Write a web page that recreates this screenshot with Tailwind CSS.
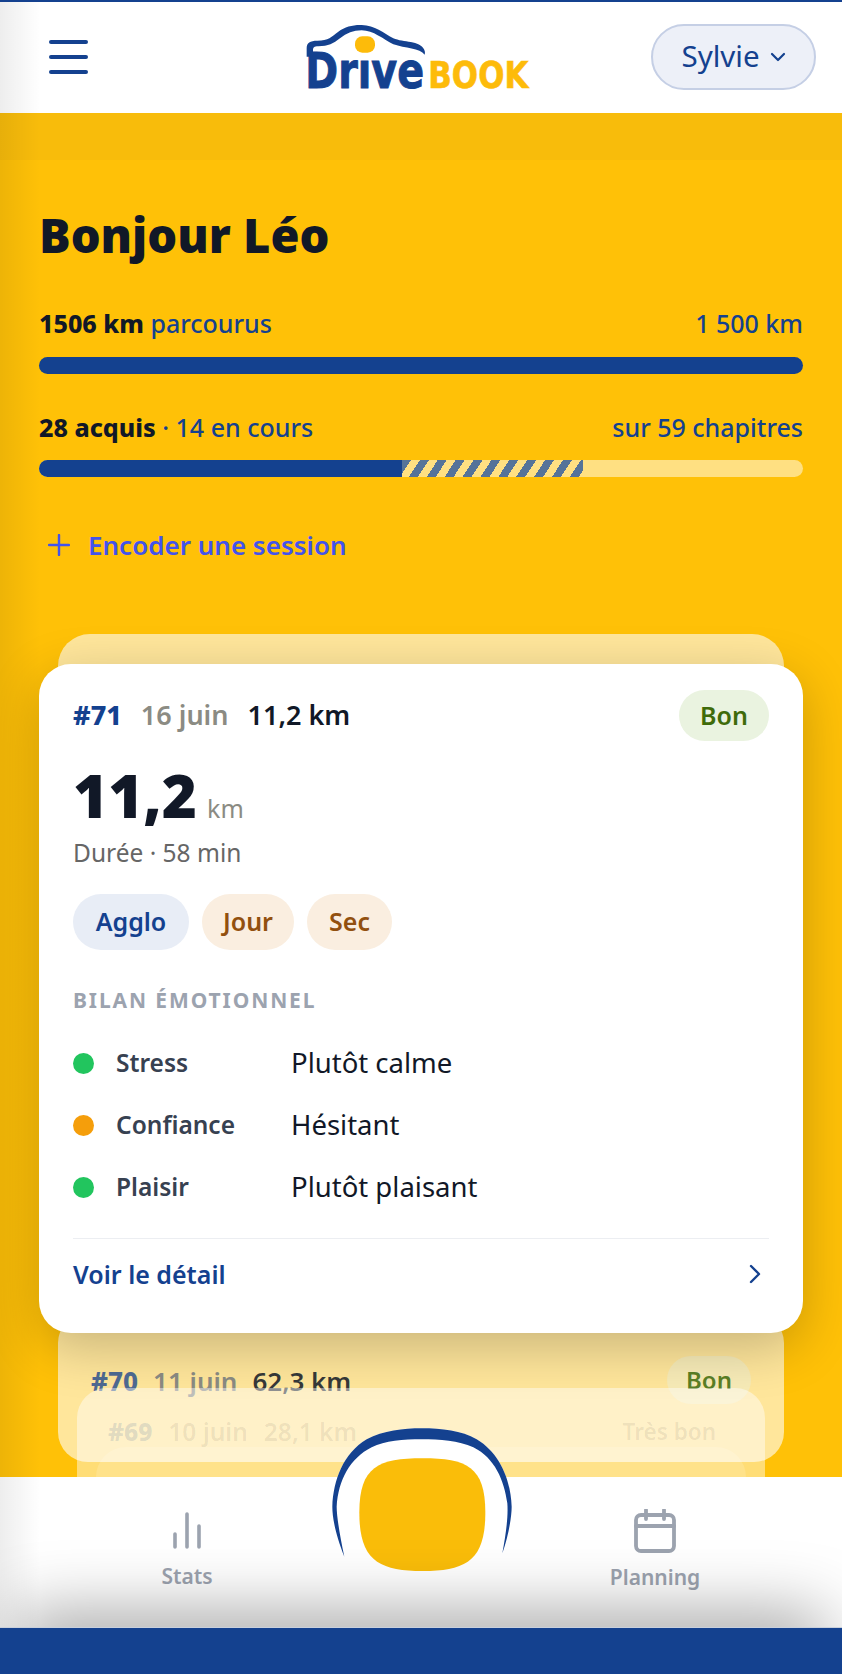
<!DOCTYPE html>
<html lang="fr">
<head>
    <meta charset="UTF-8">
    <meta name="viewport" content="width=device-width, initial-scale=1.0">
    <title>DriveBook</title>
    <script src="https://cdn.jsdelivr.net/npm/@tailwindcss/browser@4"></script>
</head>
<body class="bg-white font-['Noto_Sans','Lato',sans-serif]">
<div class="relative w-[842px] h-[1674px] overflow-hidden flex flex-col">

    <!-- header -->
    <header class="h-[113px] shrink-0 border-t-2 border-[#14418f] bg-white flex items-center justify-between pl-[49px] pr-[26px]">
        <div class="flex flex-col gap-[11px] w-[39px] -mt-[2px]">
            <span class="h-[4px] rounded-full bg-[#14418f]"></span>
            <span class="h-[4px] rounded-full bg-[#14418f]"></span>
            <span class="h-[4px] rounded-full bg-[#14418f]"></span>
        </div>
        <svg class="absolute left-[280px] top-[10px]" width="270" height="90" viewBox="0 0 810 270">
            <text x="76" y="233" font-family="DejaVu Sans" font-weight="700" font-size="148" textLength="356" lengthAdjust="spacingAndGlyphs" fill="#14418f" stroke="#14418f" stroke-width="3">Drive</text>
            <rect x="215" y="112" width="60" height="36" fill="#ffffff"/>
            <path d="M80 140 L80 115 C80 98 90 92 112 92 C145 92 155 80 175 65 C195 50 220 44 245 45 C285 47 310 68 340 85 C370 98 420 92 432 118 C436 125 435 130 434 134 C420 115 375 115 340 103 C310 88 280 61 245 61 C220 61 200 69 180 85 C160 101 145 109 115 109 C102 109 99 112 99 122 L99 140 Z" fill="#14418f"/>
            <rect x="225" y="79" width="60" height="49" rx="22" fill="#fdbb0a"/>
            <text x="445" y="233" font-family="DejaVu Sans" font-weight="700" font-size="114" textLength="300" lengthAdjust="spacingAndGlyphs" fill="#fdbb0a" stroke="#fdbb0a" stroke-width="2">BOOK</text>
        </svg>
        <button class="w-[165px] h-[66px] -mt-[2px] rounded-[33px] border-2 border-[#c5cfe5] bg-[#edf0f8] flex items-center justify-center gap-[10px] text-[29.5px] text-[#14418f]">
            Sylvie
            <svg width="16" height="10" viewBox="0 0 16 10" fill="none" stroke="#14418f" stroke-width="2.2" stroke-linecap="round" stroke-linejoin="round"><path d="M2 2l6 6 6-6"/></svg>
        </button>
    </header>

    <!-- contenu -->
    <main class="relative flex-1 min-h-0 overflow-hidden bg-[#ffc107] px-[39px]">
        <div class="absolute left-0 right-0 top-0 h-[47px] bg-[#f8bc0b]"></div>

        <h1 class="relative mt-[94px] text-[47px] leading-[56px] font-black text-[#111827]">Bonjour Léo</h1>

        <div class="relative mt-[44px] flex justify-between text-[25px] leading-[32px] font-medium text-[#14418f]">
            <span><b class="font-extrabold text-[#111827]">1506 km</b> parcourus</span>
            <span>1 500 km</span>
        </div>
        <div class="mt-[18px] h-[17px] rounded-full bg-[#14418f]"></div>

        <div class="mt-[37px] flex justify-between text-[25px] leading-[32px] font-medium text-[#14418f]">
            <span><b class="font-extrabold text-[#111827]">28 acquis</b> · 14 en cours</span>
            <span>sur 59 chapitres</span>
        </div>
        <div class="mt-[17px] h-[17px] rounded-full bg-[#ffe082] overflow-hidden flex">
            <div class="w-[363px] bg-[#14418f]"></div>
            <div class="w-[181px] bg-[repeating-linear-gradient(123deg,#557399_0_7.5px,#ffe082_7.5px_15px)]"></div>
        </div>

        <div class="mt-[50px] ml-[9px] flex items-center gap-[18px] text-[26px] leading-[36px] font-semibold text-[#4353ec]">
            <svg width="22" height="22" viewBox="0 0 22 22" fill="none" stroke="#4353ec" stroke-width="2.4" stroke-linecap="round"><path d="M11 1v20M1 11h20"/></svg>
            Encoder une session
        </div>

        <!-- pile de sessions -->
        <div class="mt-[71px] mx-[19px] h-[60px] -mb-[30px] rounded-t-[32px] bg-white/60"></div>

        <section class="relative z-30 h-[669px] rounded-[32px] bg-white shadow-[0_14px_52px_rgba(0,0,0,0.22)] px-[34px] pt-[26px]">
            <div class="flex items-center justify-between">
                <div class="flex items-baseline text-[27px] font-semibold">
                    <span class="text-[#14418f] font-extrabold">#71</span>
                    <span class="ml-[19px] text-[#8b8b83]">16 juin</span>
                    <span class="ml-[19px] text-[#111827]">11,2 km</span>
                </div>
                <span class="w-[90px] h-[51px] rounded-full bg-[#eaf3e0] text-[#3f6b0a] text-[25px] font-semibold flex items-center justify-center">Bon</span>
            </div>
            <div class="mt-[18px] flex items-baseline gap-[10px]">
                <span class="text-[60px] leading-[72px] font-black text-[#111827]">11,2</span>
                <span class="text-[25px] text-[#8b8b83]">km</span>
            </div>
            <p class="mt-[5px] text-[24.5px] leading-[34px] text-[#666666]">Durée · 58 min</p>
            <div class="mt-[24px] flex gap-[13px] text-[25px] font-semibold">
                <span class="w-[116px] h-[56px] rounded-full bg-[#e8edf6] text-[#14418f] flex items-center justify-center">Agglo</span>
                <span class="w-[92px] h-[56px] rounded-full bg-[#faeee0] text-[#92500f] flex items-center justify-center">Jour</span>
                <span class="w-[85px] h-[56px] rounded-full bg-[#faeee0] text-[#92500f] flex items-center justify-center">Sec</span>
            </div>
            <h2 class="mt-[37px] text-[21px] leading-[26px] font-bold tracking-[1.9px] text-[#9ca3af]">BILAN ÉMOTIONNEL</h2>
            <ul class="mt-[32px] flex flex-col gap-[26px] leading-[36px]">
                <li class="flex items-center">
                    <span class="w-[21px] h-[21px] rounded-full bg-[#22c55e]"></span>
                    <span class="ml-[22px] w-[175px] text-[24.5px] font-semibold text-[#374151]">Stress</span>
                    <span class="text-[27.5px] text-[#111827]">Plutôt calme</span>
                </li>
                <li class="flex items-center">
                    <span class="w-[21px] h-[21px] rounded-full bg-[#f59e0b]"></span>
                    <span class="ml-[22px] w-[175px] text-[24.5px] font-semibold text-[#374151]">Confiance</span>
                    <span class="text-[27.5px] text-[#111827]">Hésitant</span>
                </li>
                <li class="flex items-center">
                    <span class="w-[21px] h-[21px] rounded-full bg-[#22c55e]"></span>
                    <span class="ml-[22px] w-[175px] text-[24.5px] font-semibold text-[#374151]">Plaisir</span>
                    <span class="text-[27.5px] text-[#111827]">Plutôt plaisant</span>
                </li>
            </ul>
            <div class="mt-[33px] border-t border-[#eceef2] pt-[18px] flex items-center justify-between pr-[8px]">
                <span class="text-[25px] leading-[34px] font-semibold text-[#14418f]">Voir le détail</span>
                <svg width="12" height="20" viewBox="0 0 12 20" fill="none" stroke="#14418f" stroke-width="2.4" stroke-linecap="round" stroke-linejoin="round"><path d="M2 2l8 8-8 8"/></svg>
            </div>
        </section>

        <section class="relative z-10 -mt-[20px] mx-[19px] h-[149px] rounded-[30px] bg-white/60 px-[33px] pt-[49px] flex justify-between items-start">
            <div class="flex items-baseline text-[26px] font-semibold">
                <span class="text-[#14418f]/75 font-extrabold">#70</span>
                <span class="ml-[15px] text-[#8b8b83]">11 juin</span>
                <span class="ml-[15px] text-[#111827]/85">62,3 km</span>
            </div>
            <span class="-mt-[6px] w-[84px] h-[48px] rounded-full bg-[#eaf3e0]/40 text-[#3f6b0a]/85 text-[24px] font-semibold flex items-center justify-center">Bon</span>
        </section>
        <section class="relative z-20 -mt-[74px] mx-[38px] h-[200px] rounded-t-[30px] bg-white/45 px-[31px] pt-[26px] flex justify-between items-start">
            <div class="flex items-baseline text-[24.5px] font-semibold text-black/8">
                <span class="font-extrabold text-[#14418f]/15">#69</span>
                <span class="ml-[16px]">10 juin</span>
                <span class="ml-[16px]">28,1 km</span>
            </div>
            <span class="mt-[1px] text-[22.5px] font-semibold text-black/8 mr-[18px]">Très bon</span>
        </section>
        <div class="absolute z-20 left-[96px] w-[650px] top-[1334px] h-[40px] rounded-t-[30px] bg-white/15"></div>
    </main>

    <!-- navigation -->
    <nav class="relative z-40 h-[150px] shrink-0 bg-white">
        <div class="absolute left-[127px] w-[120px] top-[35px] flex flex-col items-center">
            <svg width="30" height="37" viewBox="0 0 30 37" fill="none" stroke="#9ca3af" stroke-width="3.6" stroke-linecap="round"><path d="M3 22v13M15 2v33M27 14v21"/></svg>
            <span class="mt-[13px] text-[21px] leading-[28px] font-semibold text-[#9ca3af]">Stats</span>
        </div>
        <div class="absolute left-[585px] w-[140px] top-[32px] flex flex-col items-center">
            <svg width="42" height="44" viewBox="0 0 42 44" fill="none" stroke="#9ca3af" stroke-width="3.8" stroke-linecap="round" stroke-linejoin="round"><rect x="2" y="6" width="38" height="36" rx="5"/><path d="M2 17h38M12 1v9M30 1v9"/></svg>
            <span class="mt-[10px] text-[21px] leading-[28px] font-semibold text-[#9ca3af]">Planning</span>
        </div>
        <svg class="absolute left-[300px] -top-[77px]" width="240" height="200" viewBox="0 0 720 600">
            <path d="M133 470 C105 400 97 350 97 320 C100 240 130 160 200 118 C250 92 310 85 365 85 C425 85 485 92 530 118 C600 160 632 240 635 320 C635 350 625 410 607 460 L607 600 L133 600 Z" fill="#ffffff"/>
            <path d="M133 470 C105 400 97 350 97 320 C100 240 130 160 200 118 C250 92 310 85 365 85 C425 85 485 92 530 118 C600 160 632 240 635 320 C635 350 625 410 607 460 C618 400 625 350 622 310 C612 240 585 175 520 142 C475 122 420 118 365 118 C310 118 255 122 215 142 C150 175 115 240 110 320 C110 350 120 410 133 470 Z" fill="#14418f"/>
            <path d="M368 175 C500 175 556 200 556 338 C556 480 500 513 368 513 C235 513 178 480 178 338 C178 200 235 175 368 175 Z" fill="#fabd09"/>
        </svg>
        <!-- ombre de la barre du bas -->
        <div class="absolute left-[30px] right-[30px] top-[150px] h-[40px] shadow-[0_0_68px_12px_rgba(0,0,0,0.38)]"></div>
    </nav>

    <div class="relative z-50 h-[47px] shrink-0 bg-[#14418f] border-t border-[#c9d0dc]"></div>

    <!-- ombre du bord gauche -->
    <div class="absolute left-0 top-[2px] h-[1625px] w-[40px] z-50 pointer-events-none bg-gradient-to-r from-black/7 to-transparent"></div>
</div>
</body>
</html>
